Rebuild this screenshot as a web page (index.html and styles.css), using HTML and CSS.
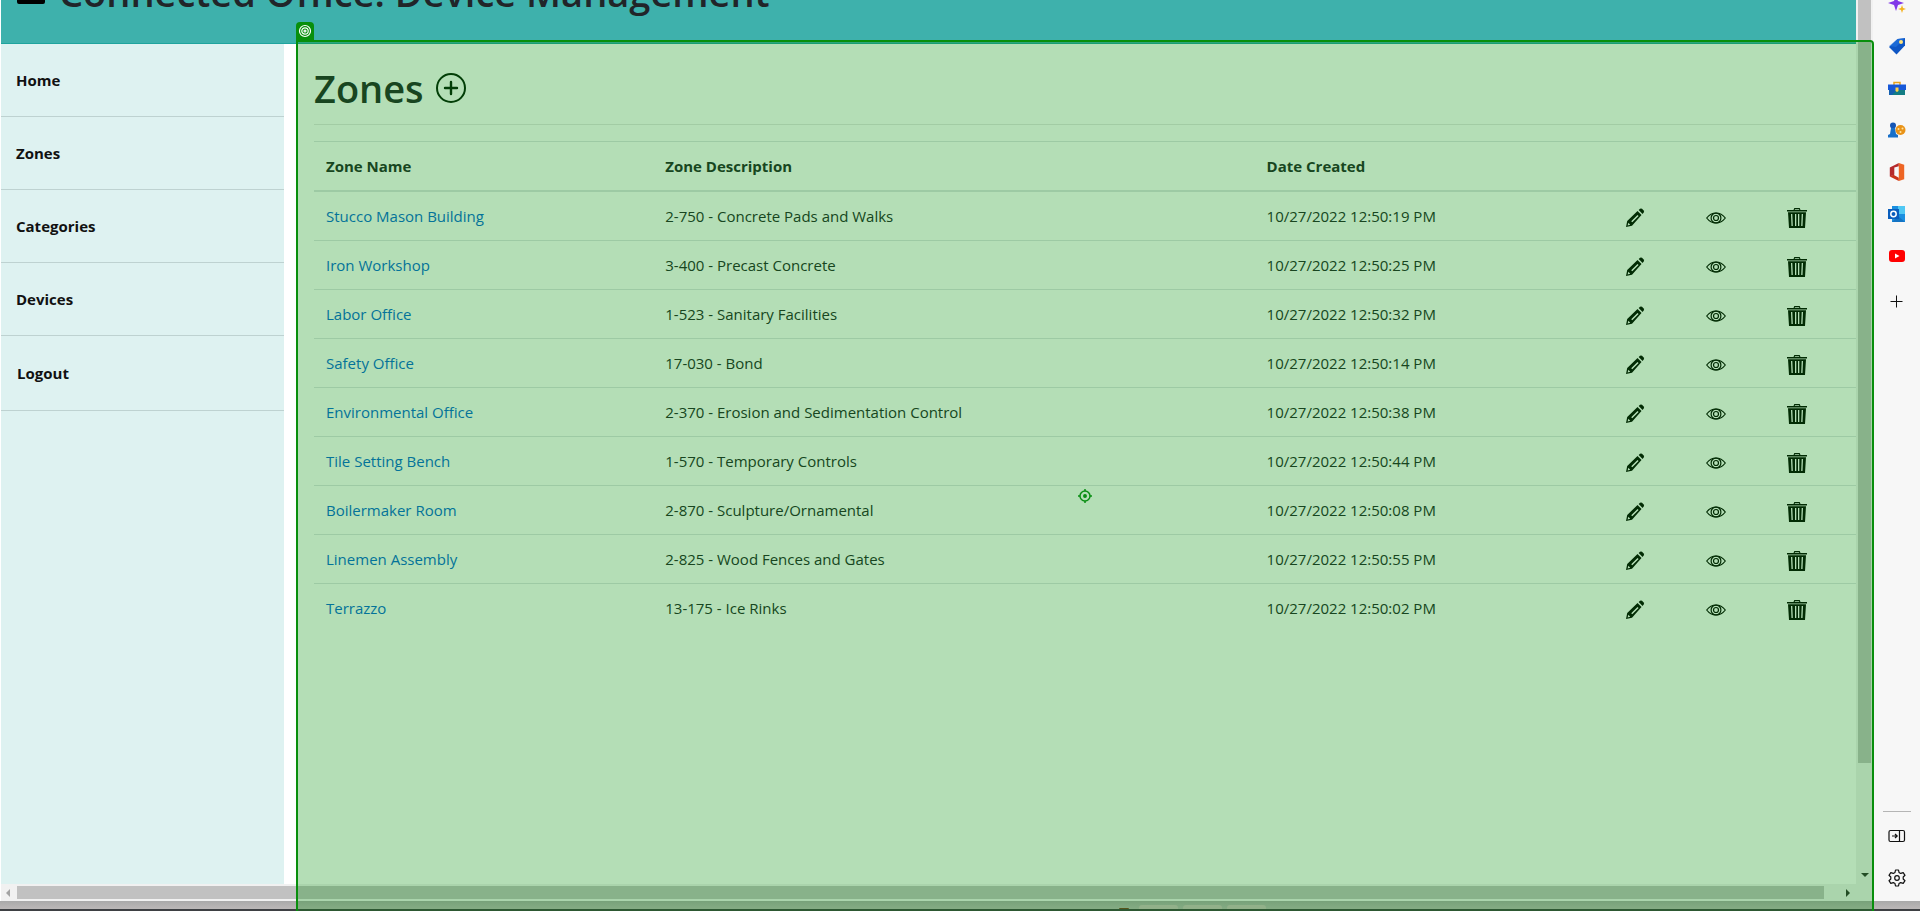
FILE: index.html
```
<!DOCTYPE html>
<html lang="en">
<head>
<meta charset="utf-8">
<title>Zones - Connected Office</title>
<link rel="stylesheet" href="styles.css">
</head>
<body>
<svg class="defs" aria-hidden="true">
  <symbol id="pencil" viewBox="0 0 20 20"><path fill-rule="evenodd" d="M1 19l1.200-6L12.500 3l4 4L7 17.800zM6.200 13.200l1.100 1.100L13.600 8l-1.100-1.100zM2.600 17.400l2.600-.7-1.800-1.900z"/><path d="M13.700 2l1.300-1.200q1-.8 2 0l1.700 1.800q.8 1 0 2L17.500 6z"/></symbol>
  <symbol id="eye" viewBox="0 0 20 20"><g fill="none" stroke="currentColor" stroke-width="1.200"><path d="M.7 10Q4.500 5 10 5t9.300 5Q15.500 15 10 15T.7 10z"/><circle cx="10" cy="10" r="4.900"/><circle cx="10" cy="10" r="2.500"/></g></symbol>
  <symbol id="trash" viewBox="0 0 20 20"><path fill-rule="evenodd" d="M0 2h6.500l.8-2h5.400l.8 2H20v1.600H0zM8 1.200L7.700 2h4.600L12 1.200zM1 4.300h18L18 20H2zM4 6l.5 12h1.300L5.300 6zm4 0v12h1.300V6zm3 0v12h1.300V6zm3.700 0l-.5 12h1.300L16 6z"/></symbol>
</svg>
<div class="screen">
  <div class="browser">
    <div class="viewport">
      <div class="page">
        <header class="banner">
          <button class="menu-btn" aria-label="Menu"><svg viewBox="0 0 28 28"><path d="M0 3h28v5H0zM0 13h28v5H0zM0 23h28v3q0 2-2 2H2q-2 0-2-2z"/></svg></button>
          <p class="site-title">Connected Office: Device Management</p>
        </header>
        <div class="content">
          <nav class="sidebar">
            <a href="#">Home</a>
            <a href="#">Zones</a>
            <a href="#">Categories</a>
            <a href="#">Devices</a>
            <button type="button">Logout</button>
          </nav>
          <main class="main">
            <h1>Zones <a class="add" href="#" aria-label="Add zone"><svg viewBox="0 0 30 30"><g fill="none" stroke="currentColor" stroke-width="2"><circle cx="15" cy="15" r="14"/><path d="M15 9v12M9 15h12" stroke-width="2.400" stroke-linecap="round"/></g></svg></a></h1>
            <hr>
            <table>
              <colgroup><col class="c-name"><col class="c-desc"><col class="c-date"><col class="c-act"><col class="c-act"><col class="c-act"></colgroup>
              <thead><tr><th>Zone Name</th><th>Zone Description</th><th>Date Created</th><th></th><th></th><th></th></tr></thead>
              <tbody id="rows"></tbody>
            </table>
          </main>
        </div>
      </div>
      <div class="vscroll"><div class="vthumb"></div><svg viewBox="0 0 8 4"><path d="M0 0h8L4 4z"/></svg></div>
      <div class="hscroll"><svg class="left" viewBox="0 0 4 8"><path d="M4 0v8L0 4z"/></svg><div class="hthumb"></div><svg viewBox="0 0 4 8"><path d="M0 0v8l4-4z"/></svg></div>
    </div>
    <aside class="edge">
      <button class="first" aria-label="Discover"><svg viewBox="0 0 18 18"><path fill="#8238e8" d="M8 1l2 5 6 2-6 2-2 6-2-6-6-2 6-2z"/><path fill="#f5b21c" d="M14 10l1 3 3 1-3 1-1 3-1-3-3-1 3-1z"/></svg></button>
      <button aria-label="Shopping"><svg viewBox="0 0 18 18"><path fill="#0f56c4" d="M9.500 2L17 1v7.500L8.500 17.500 1 10z"/><path fill="#2a7de8" d="M9.500 2L17 1l-9 9-7-1z" opacity=".5"/><circle cx="13" cy="5" r="2" fill="#ffe27a"/></svg></button>
      <button aria-label="Tools"><svg viewBox="0 0 18 18"><path d="M6 6V3.500h6V6" fill="none" stroke="#e9a21b" stroke-width="1.500"/><path fill="#1758d8" d="M0 5.500h18V11H0z"/><path fill="#137d84" d="M1 11h16v5H1z"/><path fill="#1560b0" d="M1 11h8l-5 5H1z"/><path fill="#ffd24a" d="M7.500 8.500h3V12l-1.500 1-1.500-1z"/></svg></button>
      <button aria-label="Games"><svg viewBox="0 0 18 18"><circle cx="5" cy="4.500" r="3" fill="#1656b5"/><path fill="#1870c9" d="M3 7h4l1 6 2 1v2.500H0V14l2-1z"/><circle cx="12.500" cy="9" r="5" fill="#e99318"/><g fill="#ffe3a0"><circle cx="10.500" cy="8" r="1"/><circle cx="14.500" cy="7.500" r="1"/><circle cx="12.500" cy="11" r="1"/></g></svg></button>
      <button aria-label="Office"><svg viewBox="0 0 18 20"><path fill="#c8321a" d="M1 15l4-2 6 3.500V20z"/><path fill="#b52a2c" d="M1 5l10-5v3.500L6 5v8l-5 2z"/><path fill="#ee6524" d="M11 0l6 2v16l-6 2z"/></svg></button>
      <button aria-label="Outlook"><svg viewBox="0 0 18 18"><path fill="#1b8fe0" d="M4 1h13v16H4z"/><path fill="#50c8f4" d="M10 1h7v8h-7z"/><path fill="#1474c4" d="M4 17l6-6 7 6z"/><path fill="#0a5ebd" d="M0 4h11v10H0z"/><circle cx="5.500" cy="9" r="2.700" fill="none" stroke="#fff" stroke-width="1.500"/></svg></button>
      <button aria-label="YouTube"><svg viewBox="0 0 18 18"><rect y="3" x="1" width="16" height="12" rx="3" fill="#f00"/><path fill="#fff" d="M7 6.500v5L11.500 9z"/></svg></button>
      <button class="plus" aria-label="Add"><svg viewBox="0 0 18 18"><path d="M8.500 2.500v12M2.500 8.500h12" stroke="#111"/></svg></button>
      <span class="grow"></span>
      <hr>
      <button aria-label="Hide sidebar"><svg class="line" viewBox="0 0 18 18"><rect x="1" y="3.500" width="15.500" height="11" rx="1.500"/><path d="M11.500 3.500v11M4 9h5M7 7l2.200 2L7 11"/></svg></button>
      <button aria-label="Settings"><svg class="line" viewBox="0 0 18 18"><path d="M7.500 1h3l.5 2.400 1.700 1 2.500-.8L17 6.300 15.200 8v2l1.800 1.700-1.800 2.700-2.500-.8-1.700 1-.5 2.400h-3L7 14.600l-1.700-1-2.500.8L1 11.700 2.800 10V8L1 6.300l1.800-2.700 2.500.8 1.700-1z"/><circle cx="9" cy="9" r="2.300"/></svg></button>
    </aside>
  </div>
  <div class="desk"><i class="dot"></i><i></i><i></i><i></i></div>
  <div class="highlight"><span class="tag"><svg class="line" viewBox="0 0 14 14"><circle cx="7" cy="7" r="5.500"/><circle cx="7" cy="7" r="3.200"/><circle cx="7" cy="7" r="1"/></svg></span>
    <svg class="target line" viewBox="0 0 14 14"><circle cx="7" cy="7" r="5"/><circle class="solid" cx="7" cy="7" r="1.200"/><path d="M7 0v2M7 12v2M0 7h2M12 7h2"/></svg></div>
</div>
<script src="rows.js"></script>
</body>
</html>
```
FILE: styles.css
```
* { box-sizing: border-box; }
body { margin: 0; font: 15px/24px "Open Sans", "Noto Sans", sans-serif; color: #212529; overflow: hidden; }
button { border: 0; padding: 0; background: none; font: inherit; color: inherit; text-align: left; }
a { color: #0366d6; text-decoration: none; }
svg { display: block; fill: currentColor; }
.line { fill: none; stroke: currentColor; stroke-width: 1.2; stroke-linejoin: round; }
.defs { position: absolute; width: 0; height: 0; }
.screen { position: relative; display: flex; flex-direction: column; height: 100vh; overflow: hidden; background: #fff; }
.browser { flex: 1; display: flex; min-height: 0; padding-left: 1px; }
.viewport { flex: 1; display: grid; grid-template: 1fr 17px / 1fr 17px; min-width: 0; }
.page { display: flex; flex-direction: column; min-height: 0; overflow: hidden; }
.banner { display: flex; align-items: flex-end; gap: 14px; height: 44px; padding: 0 16px 27px; background: #3eb1ac; border-bottom: 1px solid #1fa49e; }
.menu-btn { padding-bottom: 12px; color: #000; }
.menu-btn svg { width: 28px; height: 28px; }
.site-title { margin: 0; font-size: 38px; line-height: 48px; font-weight: 600; white-space: nowrap; }
.content { flex: 1; display: flex; gap: 30px; min-height: 0; }
.sidebar { width: 283px; flex: none; background: #def2f1; }
.sidebar a, .sidebar button { display: block; width: 100%; padding: 24px 15px; border-bottom: 1px solid #bed2d1; color: #111; font-weight: 700; }
.sidebar button { padding: 25px 16px; }
.main { flex: 1; min-width: 0; }
h1 { display: flex; align-items: center; gap: 12px; margin: 20px 0 12px; font-size: 38px; line-height: 48px; font-weight: 600; }
.add { color: #001a05; }
.add svg { width: 30px; height: 30px; }
.main hr { margin: 0 0 16px; border: 0; border-top: 1px solid #e6e6e6; }
table { width: 100%; border-collapse: collapse; table-layout: fixed; }
.c-name { width: 22%; }
.c-desc { width: 39%; }
.c-act { width: 5.25%; }
th, td { padding: 12px; border-top: 1px solid #dee2e6; text-align: left; height: 49px; }
th { border-bottom: 2px solid #dee2e6; font-weight: 700; }
td a { display: block; }
td svg { width: 20px; height: 20px; margin-top: 4px; color: #000; }
.vscroll { display: flex; flex-direction: column; align-items: center; background: #f1f1f1; padding: 0 2px 7px; }
.vthumb { width: 13px; height: 87%; background: #c1c1c1; }
.vscroll svg { width: 8px; height: 4px; margin-top: auto; color: #303030; }
.hscroll { grid-column: 1 / 3; display: flex; align-items: center; background: #f1f1f1; padding: 0 23px 0 5px; }
.hscroll svg { width: 4px; height: 8px; color: #303030; }
.hscroll .left { color: #a3a3a3; }
.hthumb { flex: 1; height: 13px; margin: 0 22px 0 7px; background: #c1c1c1; }
.edge { width: 47px; flex: none; display: flex; flex-direction: column; align-items: center; gap: 24px; padding-bottom: 14px; background: #f7f7f7; }
.edge button { display: block; }
.edge svg { width: 18px; height: 18px; }
.edge .line { color: #111; }
.edge .first { margin-top: -5px; }
.edge .plus { margin-top: 4px; }
.grow { flex: 1; }
.edge hr { width: 28px; margin: 0 0 -9px; border: 0; border-top: 1px solid #b5b5b5; }
.desk { height: 10px; flex: none; display: flex; gap: 5px; align-items: flex-end; padding-left: 1119px; background: linear-gradient(#a9a9a9, #bcb8b8); border-bottom: 2px solid #3e4043; }
.desk i { width: 39px; height: 4px; border-radius: 3px 3px 0 0; background: #cfbfc0; }
.desk .dot { width: 10px; height: 1px; margin-right: 5px; background: #7a3a22; }
.highlight { position: absolute; left: 296px; right: 46px; top: 40px; bottom: -6px; border: 2px solid #088f0c; border-top-right-radius: 4px; background: rgba(5, 145, 12, .3); background-clip: padding-box; }
.tag { position: absolute; left: -2px; top: -20px; width: 18px; height: 20px; padding: 2px; border-radius: 4px 4px 0 0; background: #088f0c; color: #fff; }
.tag svg { width: 14px; height: 14px; }
.target { position: absolute; left: 50%; top: 447px; width: 14px; height: 14px; margin-left: -7px; color: #0a8f14; stroke-width: 1.5; }
.solid { fill: currentColor; }
```
FILE: rows.js
```
const zones = [
  ["Stucco Mason Building", "2-750 - Concrete Pads and Walks", "19"],
  ["Iron Workshop", "3-400 - Precast Concrete", "25"],
  ["Labor Office", "1-523 - Sanitary Facilities", "32"],
  ["Safety Office", "17-030 - Bond", "14"],
  ["Environmental Office", "2-370 - Erosion and Sedimentation Control", "38"],
  ["Tile Setting Bench", "1-570 - Temporary Controls", "44"],
  ["Boilermaker Room", "2-870 - Sculpture/Ornamental", "08"],
  ["Linemen Assembly", "2-825 - Wood Fences and Gates", "55"],
  ["Terrazzo", "13-175 - Ice Rinks", "02"]
];
const action = (icon, label) => `<td><a href="#" aria-label="${label}"><svg><use href="#${icon}"/></svg></a></td>`;
document.getElementById("rows").innerHTML = zones.map(([name, desc, sec]) =>
  `<tr><td><a href="#">${name}</a></td><td>${desc}</td><td>10/27/2022 12:50:${sec} PM</td>` +
  action("pencil", "Edit") + action("eye", "View") + action("trash", "Delete") + "</tr>").join("");
```
